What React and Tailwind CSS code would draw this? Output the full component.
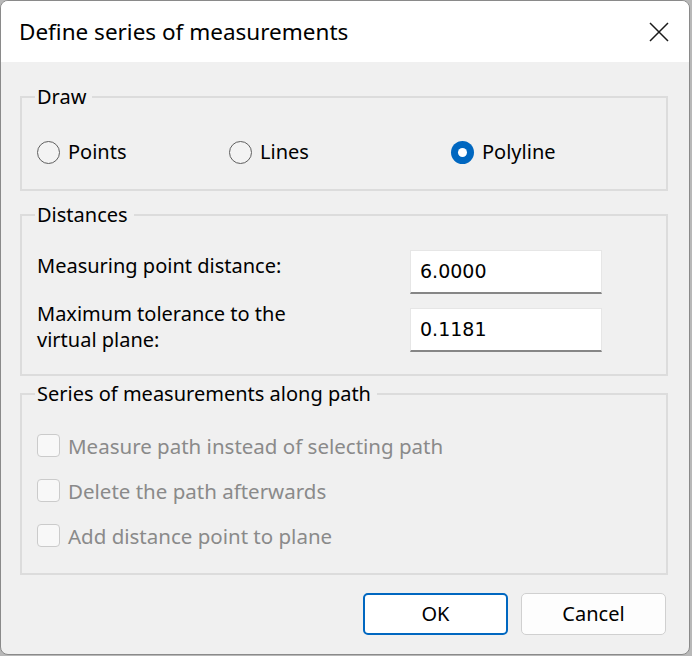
import { useState } from "react";

const ui = { fontFamily: '"Noto Sans", "Open Sans", sans-serif' };
const fieldFont = { fontFamily: '"DejaVu Sans", "Liberation Sans", sans-serif' };

const Radio = ({ label, checked, onClick }) => (
  <button type="button" onClick={onClick} className="flex items-center gap-[8px] h-[24px]">
    {checked ? (
      <span className="w-[23px] h-[23px] rounded-full bg-[#0067c0] flex items-center justify-center">
        <span className="w-[9px] h-[9px] rounded-full bg-white" />
      </span>
    ) : (
      <span className="w-[23px] h-[23px] rounded-full border-[1.5px] border-[#5f5f5f] bg-[#f3f3f3]" />
    )}
    <span className="text-[20px] leading-[24px] text-black">{label}</span>
  </button>
);

const Check = ({ label }) => (
  <div className="flex items-center gap-[8px] h-[45px]">
    <span className="w-[23px] h-[23px] rounded-[4px] border-[1.5px] border-[#cbcbcb] bg-[#f8f8f8]" />
    <span className="text-[20.5px] leading-[24px] text-[#8a8a8a]">{label}</span>
  </div>
);

const Group = ({ title, className, children }) => (
  <fieldset className={"ml-[19px] w-[648px] border-2 border-[#dcdcdc] px-[15px] " + className}>
    <legend className="ml-[-2px] pl-[2px] pr-[6px] text-[20px] leading-[24px] text-black">{title}</legend>
    {children}
  </fieldset>
);

const Field = ({ value }) => (
  <div
    className="w-[192px] h-[44px] shrink-0 bg-white border border-[#e6e6e6] border-b-2 border-b-[#868686] flex items-center pl-[9px] text-[19px] text-black"
    style={fieldFont}
  >
    {value}
  </div>
);

export default function App() {
  const [mode, setMode] = useState("polyline");

  return (
    <div className="w-[692px] h-[656px] bg-[#b8b8b8]" style={ui}>
      <div className="w-[690px] h-[655px] rounded-[8px] border border-[#8a8a8a] bg-[#f0f0f0] overflow-hidden flex flex-col">
        {/* title bar */}
        <div className="h-[61px] bg-white flex items-center justify-between pl-[18px] pr-[20px] shrink-0">
          <span className="text-[22.5px] text-black">Define series of measurements</span>
          <svg width="20" height="20" viewBox="0 0 20 20" fill="none" stroke="#1a1a1a" strokeWidth="1.5">
            <path d="M1 1L19 19M19 1L1 19" />
          </svg>
        </div>

        <Group title="Draw" className="mt-[23px] pt-[31px] pb-[25px]">
          <div className="flex">
            <div className="w-[192px]">
              <Radio label="Points" checked={mode === "points"} onClick={() => setMode("points")} />
            </div>
            <div className="w-[222px]">
              <Radio label="Lines" checked={mode === "lines"} onClick={() => setMode("lines")} />
            </div>
            <Radio label="Polyline" checked={mode === "polyline"} onClick={() => setMode("polyline")} />
          </div>
        </Group>

        <Group title="Distances" className="mt-[12px] pt-[23px] pb-[22px]">
          <div className="flex flex-col gap-[14px]">
            <div className="flex items-start h-[44px]">
              <span className="w-[373px] mt-[4px] text-[20px] leading-[24px] text-black">Measuring point distance:</span>
              <Field value="6.0000" />
            </div>
            <div className="flex items-start h-[44px]">
              <span className="w-[373px] mt-[-7px] text-[20px] leading-[26px] text-black">
                Maximum tolerance to the
                <br />
                virtual plane:
              </span>
              <Field value="0.1181" />
            </div>
          </div>
        </Group>

        <Group title="Series of measurements along path" className="mt-[6px] pt-[17px] pb-[15px]">
          <div className="flex flex-col">
            <Check label="Measure path instead of selecting path" />
            <Check label="Delete the path afterwards" />
            <Check label="Add distance point to plane" />
          </div>
        </Group>

        <div className="flex justify-end gap-[13px] mt-[18px] pr-[23px]">
          <button className="w-[145px] h-[42px] rounded-[5px] border-2 border-[#0067c0] bg-white text-[20px] text-black">
            OK
          </button>
          <button className="w-[145px] h-[42px] rounded-[5px] border border-[#d0d0d0] bg-[#fdfdfd] text-[20px] text-black">
            Cancel
          </button>
        </div>
      </div>
    </div>
  );
}
